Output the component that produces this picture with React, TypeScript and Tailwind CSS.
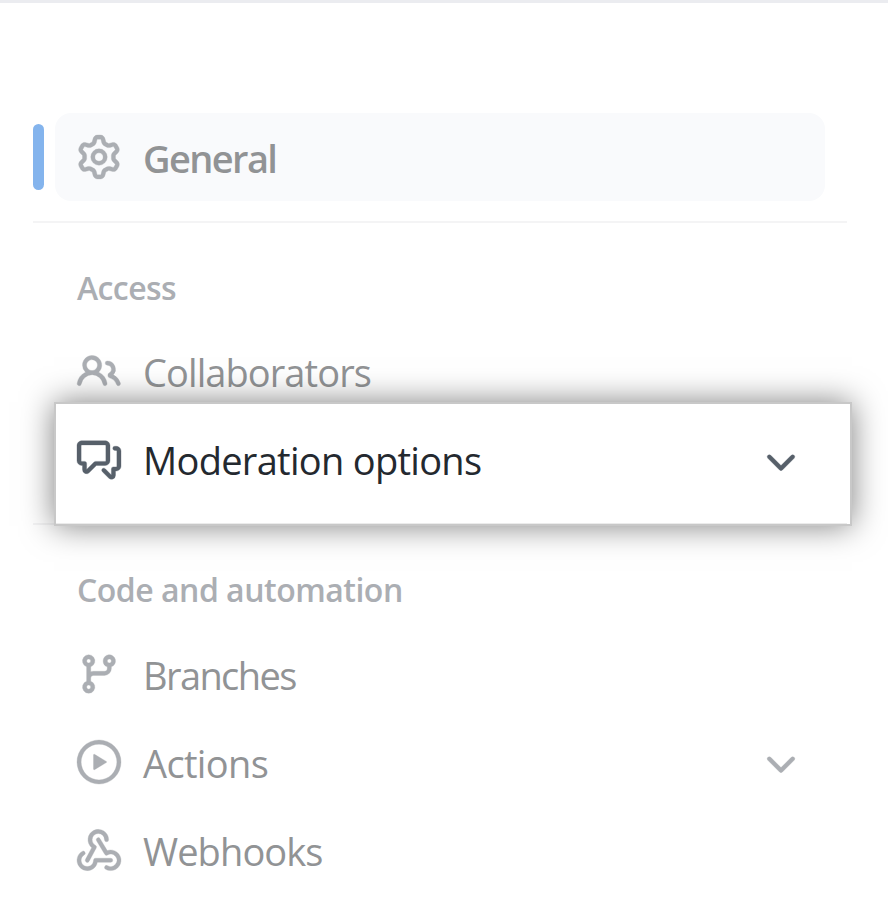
const icons = {
  gear: "M8 0a8.2 8.2 0 0 1 .701.031C9.444.095 9.99.645 10.16 1.29l.288 1.107c.018.066.079.158.212.224.231.114.454.243.668.386.123.082.233.09.299.071l1.103-.303c.644-.176 1.392.021 1.82.63.27.385.506.792.704 1.218.315.675.111 1.422-.364 1.891l-.814.806c-.049.048-.098.147-.088.294.016.257.016.515 0 .772-.01.147.038.246.088.294l.814.806c.475.469.679 1.216.364 1.891a7.977 7.977 0 0 1-.704 1.217c-.428.61-1.176.807-1.82.63l-1.102-.302c-.067-.019-.177-.011-.3.071a5.909 5.909 0 0 1-.668.386c-.133.066-.194.158-.211.224l-.29 1.106c-.168.646-.715 1.196-1.458 1.26a8.006 8.006 0 0 1-1.402 0c-.743-.064-1.289-.614-1.458-1.26l-.289-1.106c-.018-.066-.079-.158-.212-.224a5.738 5.738 0 0 1-.668-.386c-.123-.082-.233-.09-.299-.071l-1.103.303c-.644.176-1.392-.021-1.82-.63a8.12 8.12 0 0 1-.704-1.218c-.315-.675-.111-1.422.363-1.891l.815-.806c.05-.048.098-.147.088-.294a6.214 6.214 0 0 1 0-.772c.01-.147-.038-.246-.088-.294l-.815-.806C.635 6.045.431 5.298.746 4.623a7.92 7.92 0 0 1 .704-1.217c.428-.61 1.176-.807 1.82-.63l1.102.302c.067.019.177.011.3-.071.214-.143.437-.272.668-.386.133-.066.194-.158.211-.224l.29-1.106C6.009.645 6.556.095 7.299.03 7.53.01 7.764 0 8 0Zm-.571 1.525c-.036.003-.108.036-.137.146l-.289 1.105c-.147.561-.549.967-.998 1.189-.173.086-.34.183-.5.29-.417.278-.97.423-1.529.27l-1.103-.303c-.109-.03-.175.016-.195.045-.22.312-.412.644-.573.99-.014.031-.021.11.059.19l.815.806c.411.406.562.957.53 1.456a4.709 4.709 0 0 0 0 .582c.032.499-.119 1.05-.53 1.456l-.815.806c-.081.08-.073.159-.059.19.162.346.353.677.573.989.02.03.085.076.195.046l1.102-.303c.56-.153 1.113-.008 1.53.27.161.107.328.204.501.29.447.222.85.629.997 1.189l.289 1.105c.029.109.101.143.137.146a6.6 6.6 0 0 0 1.142 0c.036-.003.108-.036.137-.146l.289-1.105c.147-.561.549-.967.998-1.189.173-.086.34-.183.5-.29.417-.278.97-.423 1.529-.27l1.103.303c.109.029.175-.016.195-.045.22-.313.411-.644.573-.99.014-.031.021-.11-.059-.19l-.815-.806c-.411-.406-.562-.957-.53-1.456a4.709 4.709 0 0 0 0-.582c-.032-.499.119-1.05.53-1.456l.815-.806c.081-.08.073-.159.059-.19a6.464 6.464 0 0 0-.573-.989c-.02-.03-.085-.076-.195-.046l-1.102.303c-.56.153-1.113.008-1.53-.27a4.44 4.44 0 0 0-.501-.29c-.447-.222-.85-.629-.997-1.189l-.289-1.105c-.029-.11-.101-.143-.137-.146a6.6 6.6 0 0 0-1.142 0ZM11 8a3 3 0 1 1-6 0 3 3 0 0 1 6 0ZM9.5 8a1.5 1.5 0 1 0-3.001.001A1.5 1.5 0 0 0 9.5 8Z",
  people: "M2 5.5a3.5 3.5 0 1 1 5.898 2.549 5.508 5.508 0 0 1 3.034 4.084.75.75 0 1 1-1.482.235 4 4 0 0 0-7.9 0 .75.75 0 0 1-1.482-.236A5.507 5.507 0 0 1 3.102 8.05 3.493 3.493 0 0 1 2 5.5ZM11 4a3.001 3.001 0 0 1 2.22 5.018 5.01 5.01 0 0 1 2.56 3.012.749.749 0 0 1-.885.954.752.752 0 0 1-.549-.514 3.507 3.507 0 0 0-2.522-2.372.75.75 0 0 1-.574-.73v-.352a.75.75 0 0 1 .416-.672A1.5 1.5 0 0 0 11 5.5.75.75 0 0 1 11 4Zm-5.5-.5a2 2 0 1 0-.001 3.999A2 2 0 0 0 5.5 3.5Z",
  discussion: "M1.75 1h8.5c.966 0 1.75.784 1.75 1.75v5.5A1.75 1.75 0 0 1 10.25 10H7.061l-2.574 2.573A1.458 1.458 0 0 1 2 11.543V10h-.25A1.75 1.75 0 0 1 0 8.25v-5.5C0 1.784.784 1 1.75 1ZM1.5 2.75v5.5c0 .138.112.25.25.25h1a.75.75 0 0 1 .75.75v2.19l2.72-2.72a.749.749 0 0 1 .53-.22h3.5a.25.25 0 0 0 .25-.25v-5.5a.25.25 0 0 0-.25-.25h-8.5a.25.25 0 0 0-.25.25Zm13 2a.25.25 0 0 0-.25-.25h-.5a.75.75 0 0 1 0-1.5h.5c.966 0 1.75.784 1.75 1.75v5.5A1.75 1.75 0 0 1 14.25 12H14v1.543a1.458 1.458 0 0 1-2.487 1.03L9.22 12.28a.749.749 0 0 1 .326-1.275.749.749 0 0 1 .734.215l2.22 2.22v-2.19a.75.75 0 0 1 .75-.75h1a.25.25 0 0 0 .25-.25Z",
  branch: "M9.5 3.25a2.25 2.25 0 1 1 3 2.122V6A2.5 2.5 0 0 1 10 8.5H6a1 1 0 0 0-1 1v1.128a2.251 2.251 0 1 1-1.5 0V5.372a2.25 2.25 0 1 1 1.5 0v1.836A2.493 2.493 0 0 1 6 7h4a1 1 0 0 0 1-1v-.628A2.25 2.25 0 0 1 9.5 3.25Zm-6 0a.75.75 0 1 0 1.5 0 .75.75 0 0 0-1.5 0Zm8.25-.75a.75.75 0 1 0 0 1.5.75.75 0 0 0 0-1.5ZM4.25 12a.75.75 0 1 0 0 1.5.75.75 0 0 0 0-1.5Z",
  play: "M8 0a8 8 0 1 1 0 16A8 8 0 0 1 8 0ZM1.5 8a6.5 6.5 0 1 0 13 0 6.5 6.5 0 0 0-13 0Zm4.879-2.773 4.264 2.559a.25.25 0 0 1 0 .428l-4.264 2.559A.25.25 0 0 1 6 10.559V5.442a.25.25 0 0 1 .379-.215Z",
  webhook: "M5.5 4.25a2.25 2.25 0 0 1 4.5 0 .75.75 0 0 0 1.5 0 3.75 3.75 0 1 0-6.14 2.889l-2.272 4.258a.75.75 0 0 0 1.324.706L7 7.25a.75.75 0 0 0-.309-1.015A2.25 2.25 0 0 1 5.5 4.25ZM7.364 3.607a.75.75 0 0 1 1.03.257l2.608 4.349a3.75 3.75 0 1 1-.628 6.785.75.75 0 0 1 .752-1.299 2.25 2.25 0 1 0-.033-3.88.75.75 0 0 1-1.03-.256L7.107 4.636a.75.75 0 0 1 .257-1.03ZM2.9 8.776A.75.75 0 0 1 2.625 9.8 2.25 2.25 0 1 0 6 11.75a.75.75 0 0 1 .75-.751h5.5a.75.75 0 0 1 0 1.5H7.425a3.751 3.751 0 1 1-5.55-3.998.75.75 0 0 1 1.024.274Z",
  chevron: "M12.78 5.22a.749.749 0 0 1 0 1.06l-4.25 4.25a.749.749 0 0 1-1.06 0L3.22 6.28a.749.749 0 1 1 1.06-1.06L8 8.939l3.72-3.719a.749.749 0 0 1 1.06 0Z",
};

type IconName = keyof typeof icons;

function Icon({ name, className = "" }: { name: IconName; className?: string }) {
  return (
    <svg
      viewBox="0 0 16 16"
      fill="currentColor"
      stroke="currentColor"
      strokeWidth={0.12}
      className={`size-11 shrink-0 overflow-visible ${className}`}
    >
      <path d={icons[name]} />
    </svg>
  );
}

interface ItemProps {
  icon: IconName;
  label: string;
  text?: string;
  iconClass?: string;
  expandable?: boolean;
  active?: boolean;
}

function Item({ icon, label, text = "", iconClass = "", expandable, active }: ItemProps) {
  return (
    <a
      className={`ml-[55px] flex h-[88px] w-[770px] items-center rounded-2xl px-[22px] ${
        active ? "bg-[#f9fafc] font-semibold" : "font-normal"
      }`}
    >
      <Icon name={icon} className={`text-[#abaeb3] ${iconClass}`} />
      <span className={`ml-[22px] flex-1 pt-0.5 text-[38px] leading-[56px] whitespace-nowrap text-[#919395] ${text}`}>
        {label}
      </span>
      {expandable && <Icon name="chevron" className="mt-1.5 text-[#abaeb3]" />}
    </a>
  );
}

export default function App() {
  return (
    <nav className="flex h-[898px] w-[888px] flex-col overflow-hidden border-t-[3px] border-[#ebecf0] bg-white font-['Open_Sans','Noto_Sans',sans-serif]">
      <div className="mt-[110px] flex">
        <span className="mt-[11px] -mr-11 ml-[33px] h-[66px] w-[11px] rounded-md bg-[#84b4ed]" />
        <Item icon="gear" label="General" text="tracking-[-1.6px]" active />
      </div>
      <hr className="mt-5 ml-[33px] w-[814px] border-t-2 border-[#f4f4f5]" />
      <h3 className="mt-11 ml-[77px] h-[60px] text-[32px] leading-[42px] font-semibold tracking-[-0.6px] text-[#abaeb3]">
        Access
      </h3>
      <Item icon="people" label="Collaborators" text="tracking-[-0.92px]" iconClass="mt-0.5" />
      <section className="relative z-10 -mt-[13px] ml-[54px] flex h-[124px] w-[798px] border-2 border-[#c8c8c8] bg-white pt-[34px] pl-[21px] shadow-[0_0_30px_0_rgba(0,0,0,0.5)]">
        <Icon name="discussion" className="text-[#57606a]" />
        <span className="-mt-1.5 ml-[22px] w-[616px] text-[38px] leading-[56px] tracking-[-0.7px] whitespace-nowrap text-[#24292f]">
          Moderation options
        </span>
        <Icon name="chevron" className="mt-[3px] text-[#57606a]" />
        <span className="absolute bottom-0 left-0 h-px w-[791px] bg-[#ebebeb]" />
      </section>
      <hr className="-mt-[3px] ml-[33px] w-[814px] border-t-2 border-[#f4f4f5]" />
      <h3 className="mt-11 ml-[77px] h-[61px] text-[32px] leading-[42px] font-semibold tracking-[-0.5px] text-[#abaeb3]">
        Code and automation
      </h3>
      <Item icon="branch" label="Branches" text="tracking-[-1.6px]" />
      <Item icon="play" label="Actions" text="tracking-[-0.65px]" expandable />
      <Item icon="webhook" label="Webhooks" text="tracking-[-0.9px]" />
    </nav>
  );
}
